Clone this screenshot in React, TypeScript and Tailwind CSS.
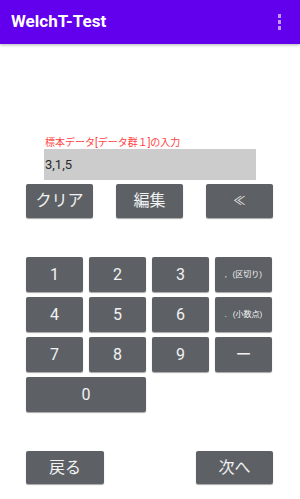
import React from 'react';

const jp = "font-['Roboto','Noto_Sans_CJK_JP',sans-serif]";

function Key({ label, className = '' }: { label: React.ReactNode; className?: string }) {
  return (
    <button
      className={`flex items-center justify-center rounded-[2px] bg-[#5d6166] text-[#f2f2f2] shadow-[0_1px_1px_rgba(0,0,0,0.35)] ${className}`}
    >
      {label}
    </button>
  );
}

export default function App() {
  const keys = ['1', '2', '3', 'sep', '4', '5', '6', 'dot', '7', '8', '9', 'minus'];

  return (
    <div className={`flex h-[499px] w-[300px] flex-col bg-white ${jp}`}>
      {/* app bar */}
      <div className="flex h-11 shrink-0 items-center justify-between bg-[#6200ee] pl-[11px] pr-[19px] shadow-[0_1px_3px_rgba(0,0,0,0.3)]">
        <span className="font-['Roboto',sans-serif] text-[17px] font-bold text-white">WelchT-Test</span>
        <div className="flex flex-col gap-[2.5px]">
          <span className="h-[3.5px] w-[3.5px] bg-white/60" />
          <span className="h-[3.5px] w-[3.5px] bg-white/60" />
          <span className="h-[3.5px] w-[3.5px] bg-white/60" />
        </div>
      </div>

      {/* input */}
      <div className="mt-[92px] pl-[45px] text-[10px] leading-[14px] text-[#ff4040]">標本データ[データ群１]の入力</div>
      <div className="ml-[44px] mt-[-1px] flex h-[31px] w-[212px] items-center bg-[#cccccc] px-[1px] text-[13px] text-[#2a2a2a]">
        3,1,5
      </div>

      {/* action row */}
      <div className="mt-[4px] flex justify-between pl-[26px] pr-[27px]">
        <Key label="クリア" className="h-[34px] w-[67px] text-[16px]" />
        <Key label="編集" className="h-[34px] w-[67px] text-[16px]" />
        <Key label="≪" className="h-[34px] w-[67px] text-[12px]" />
      </div>

      {/* keypad */}
      <div className="mt-[39px] grid grid-cols-[repeat(4,57px)] gap-x-[6px] gap-y-[5px] pl-[26px]">
        {keys.map((k) => {
          if (k === 'sep')
            return (
              <Key
                key={k}
                className="h-[35px] text-[8px]"
                label={
                  <span>
                    <span className="mr-[6px]">,</span>(区切り)
                  </span>
                }
              />
            );
          if (k === 'dot')
            return (
              <Key
                key={k}
                className="h-[35px] text-[8px]"
                label={
                  <span>
                    <span className="mr-[6px]">.</span>(小数点)
                  </span>
                }
              />
            );
          if (k === 'minus') return <Key key={k} className="h-[35px] text-[16px]" label="ー" />;
          return <Key key={k} className="h-[35px] text-[16px]" label={k} />;
        })}
        <Key label="0" className="col-span-2 h-[35px] text-[16px]" />
      </div>

      {/* nav */}
      <div className="mt-[39px] flex justify-between pl-[26px] pr-[27px]">
        <Key label="戻る" className="h-[33px] w-[78px] text-[16px]" />
        <Key label="次へ" className="h-[33px] w-[77px] text-[16px]" />
      </div>
    </div>
  );
}
